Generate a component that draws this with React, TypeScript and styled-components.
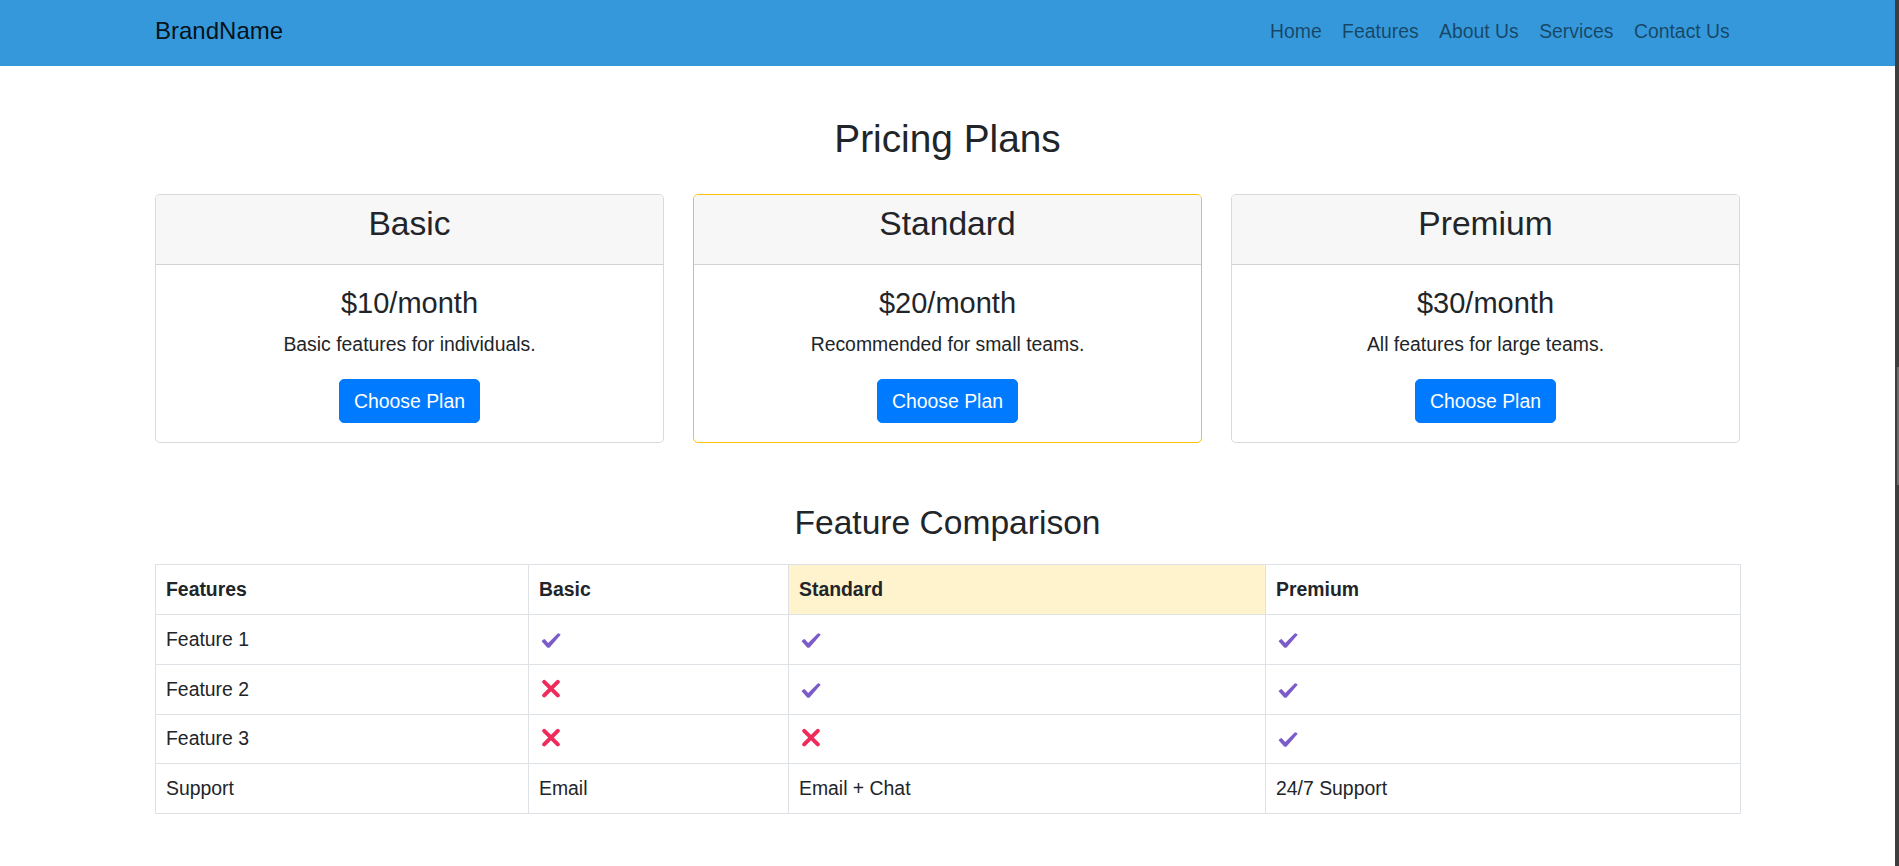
import React from "react";
import styled, { createGlobalStyle } from "styled-components";

const GlobalStyle = createGlobalStyle`
  html, body { overflow: hidden; }
  body {
    margin: 0;
    background: #fff;
    color: #212529;
    font-family: "Liberation Sans", Arial, sans-serif;
    font-size: 19.4px;
    line-height: 1.5;
  }
  * { box-sizing: border-box; }
`;

const Shell = styled.div`
  display: flex;
  min-height: 100vh;
`;

const Page = styled.div`
  flex: 1;
  min-width: 0;
`;

const ScrollTrack = styled.div`
  width: 4px;
  flex: none;
  background: #3e3e3e;
  display: flex;
  flex-direction: column;
  align-items: flex-end;
  padding-top: 367px;
`;

const ScrollThumb = styled.div`
  width: 2px;
  height: 118px;
  background: #6c6c6c;
`;

const NavBar = styled.nav`
  background: #3498db;
  height: 66px;
`;

const NavInner = styled.div`
  width: 1585px;
  margin: 0 auto;
  height: 100%;
  padding: 13px 0 17px;
  display: flex;
  align-items: center;
  justify-content: space-between;
`;

const Brand = styled.a`
  font-size: 24px;
  line-height: 36px;
  color: rgba(0, 0, 0, 0.9);
  text-decoration: none;
`;

const NavLinks = styled.div`
  display: flex;
  align-items: center;
`;

const NavLink = styled.a`
  padding: 0 10.2px;
  font-size: 19.4px;
  line-height: 29px;
  color: rgba(0, 0, 0, 0.55);
  text-decoration: none;
`;

const Main = styled.main`
  width: 1585px;
  margin: 0 auto;
  padding-top: 50px;
`;

const PageTitle = styled.h1`
  font-size: 38.8px;
  font-weight: 400;
  line-height: 1.2;
  margin: 0 0 31px;
  text-align: center;
`;

const CardGrid = styled.div`
  display: grid;
  grid-template-columns: repeat(3, 1fr);
  gap: 29px;
`;

const Card = styled.div<{ $featured?: boolean }>`
  border: 1px solid ${(p) => (p.$featured ? "#ffc107" : "rgba(0, 0, 0, 0.15)")};
  border-radius: 5px;
  background: #fff;
`;

const CardHeader = styled.div`
  background: #f7f7f7;
  border-bottom: 1px solid rgba(0, 0, 0, 0.15);
  border-radius: 4px 4px 0 0;
  padding: 9.5px 20px;
  text-align: center;
`;

const PlanName = styled.h2`
  font-size: 33.6px;
  font-weight: 400;
  line-height: 1.2;
  margin: 0 0 10px;
`;

const CardBody = styled.div`
  padding: 21.5px 20px 19.5px;
  text-align: center;
`;

const Price = styled.h3`
  font-size: 29px;
  font-weight: 400;
  line-height: 1.2;
  margin: 0 0 9px;
`;

const Desc = styled.p`
  margin: 0 0 20px;
  line-height: 29.1px;
`;

const Button = styled.button`
  background: #007bff;
  color: #fff;
  border: 1px solid #007bff;
  border-radius: 5px;
  font-family: inherit;
  font-size: 19.4px;
  line-height: 1.5;
  padding: 6.3px 13.6px;
  cursor: pointer;
`;

const SectionTitle = styled.h2`
  font-size: 33.6px;
  font-weight: 400;
  line-height: 1.2;
  margin: 59.5px 0 21px;
  text-align: center;
`;

const Table = styled.table`
  width: 1585px;
  border-collapse: collapse;
  table-layout: fixed;
`;

const HeadCell = styled.th<{ $highlight?: boolean }>`
  border: 1px solid #dee2e6;
  padding: 9.85px 10px;
  text-align: left;
  font-weight: 700;
  line-height: 29.1px;
  background: ${(p) => (p.$highlight ? "#fff3cd" : "transparent")};
`;

const Cell = styled.td`
  border: 1px solid #dee2e6;
  padding: 9.85px 10px;
  line-height: 29.1px;
  vertical-align: top;
`;

const IconSvg = styled.svg`
  display: inline-block;
  vertical-align: -2px;
  margin-left: 2px;
`;

const Check = () => (
  <IconSvg width="20" height="15" viewBox="0 0 20 15" aria-label="yes">
    <path
      d="M0.6 8.2 Q1.8 6.4 3.6 6 L7.2 9.9 L17 0.3 Q18.9 0.4 19.7 1.8 L8.6 14.4 Q7.4 15.3 6.2 14.4 Z"
      fill="#7b5cc9"
    />
  </IconSvg>
);

const Cross = () => (
  <IconSvg width="20" height="19" viewBox="0 0 20 19" aria-label="no">
    <path
      d="M3.2 2.8 L16.8 16.4 M16.8 2.8 L3.2 16.4"
      stroke="#ef2b5c"
      strokeWidth="4"
      strokeLinecap="round"
      fill="none"
    />
  </IconSvg>
);

const plans = [
  { name: "Basic", price: "$10/month", desc: "Basic features for individuals.", featured: false },
  { name: "Standard", price: "$20/month", desc: "Recommended for small teams.", featured: true },
  { name: "Premium", price: "$30/month", desc: "All features for large teams.", featured: false },
];

type CellVal = boolean | string;

const rows: { label: string; vals: CellVal[] }[] = [
  { label: "Feature 1", vals: [true, true, true] },
  { label: "Feature 2", vals: [false, true, true] },
  { label: "Feature 3", vals: [false, false, true] },
  { label: "Support", vals: ["Email", "Email + Chat", "24/7 Support"] },
];

const colWidths = [373, 260, 477, 475];

const renderVal = (v: CellVal) => {
  if (v === true) return <Check />;
  if (v === false) return <Cross />;
  return v;
};

export default function App() {
  return (
    <>
      <GlobalStyle />
      <Shell>
        <Page>
          <NavBar>
            <NavInner>
              <Brand href="#">BrandName</Brand>
              <NavLinks>
                {["Home", "Features", "About Us", "Services", "Contact Us"].map((l) => (
                  <NavLink key={l} href="#">
                    {l}
                  </NavLink>
                ))}
              </NavLinks>
            </NavInner>
          </NavBar>
          <Main>
            <PageTitle>Pricing Plans</PageTitle>
            <CardGrid>
              {plans.map((p) => (
                <Card key={p.name} $featured={p.featured}>
                  <CardHeader>
                    <PlanName>{p.name}</PlanName>
                  </CardHeader>
                  <CardBody>
                    <Price>{p.price}</Price>
                    <Desc>{p.desc}</Desc>
                    <Button>Choose Plan</Button>
                  </CardBody>
                </Card>
              ))}
            </CardGrid>
            <SectionTitle>Feature Comparison</SectionTitle>
            <Table>
              <colgroup>
                {colWidths.map((w, i) => (
                  <col key={i} style={{ width: w }} />
                ))}
              </colgroup>
              <thead>
                <tr>
                  <HeadCell>Features</HeadCell>
                  <HeadCell>Basic</HeadCell>
                  <HeadCell $highlight>Standard</HeadCell>
                  <HeadCell>Premium</HeadCell>
                </tr>
              </thead>
              <tbody>
                {rows.map((r) => (
                  <tr key={r.label}>
                    <Cell>{r.label}</Cell>
                    {r.vals.map((v, i) => (
                      <Cell key={i}>{renderVal(v)}</Cell>
                    ))}
                  </tr>
                ))}
              </tbody>
            </Table>
          </Main>
        </Page>
        <ScrollTrack>
          <ScrollThumb />
        </ScrollTrack>
      </Shell>
    </>
  );
}
